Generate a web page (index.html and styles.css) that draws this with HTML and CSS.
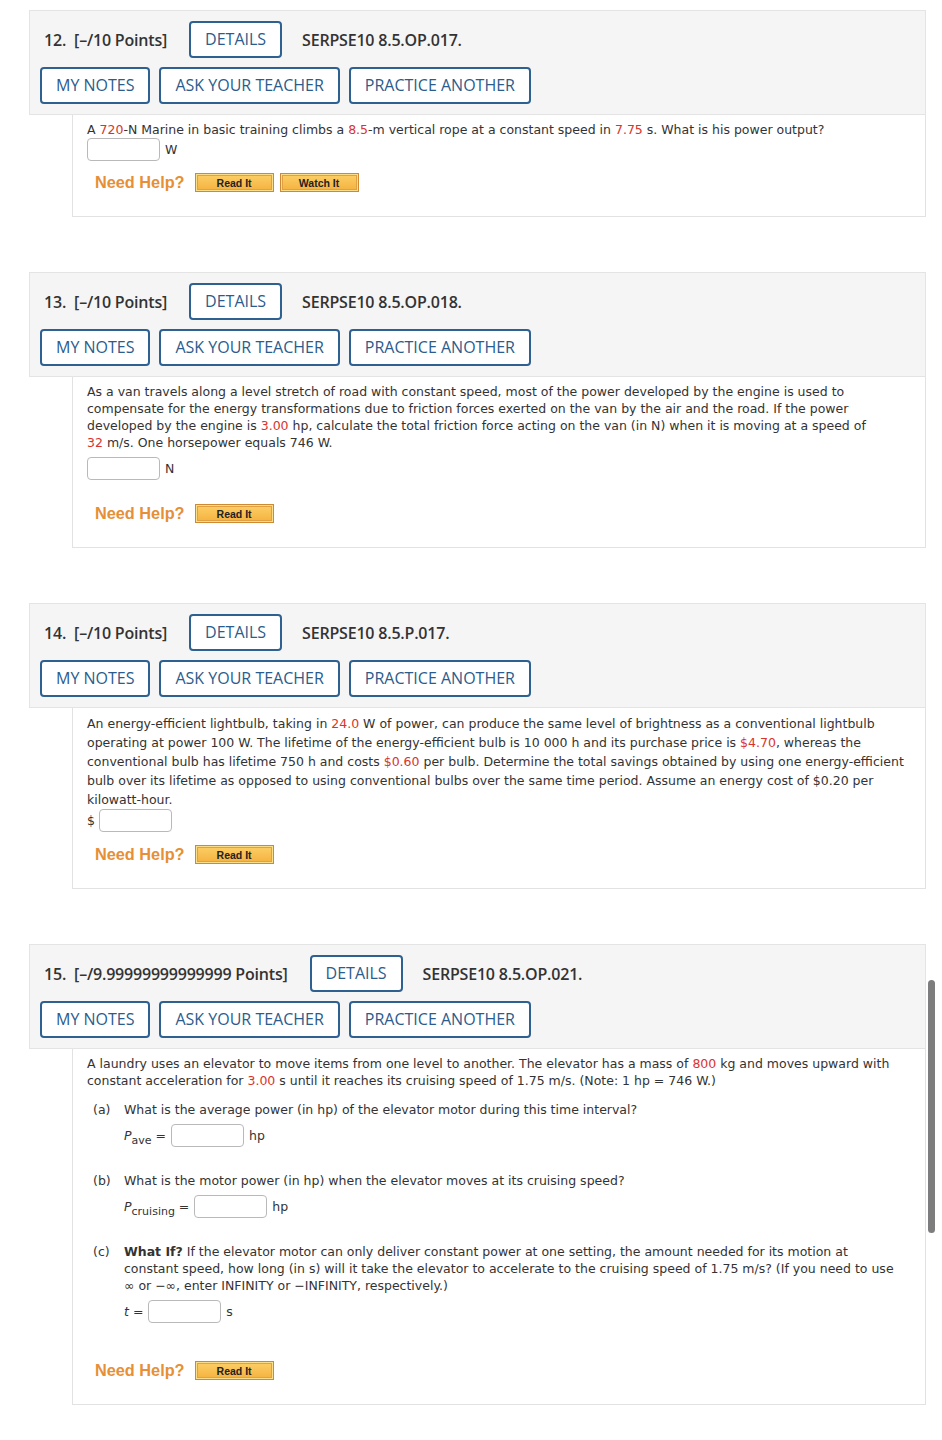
FILE: index.html
```html
<!DOCTYPE html>
<html lang="en">
<head>
  <meta charset="UTF-8">
  <meta name="viewport" content="width=device-width, initial-scale=1.0">
  <title>Assignment</title>
  <link rel="stylesheet" href="styles.css">
</head>
<body>
  <main class="assignment">

    <!-- 12 -->
    <section class="question">
      <div class="q-head">
        <div class="q-row">
          <span class="q-title"><span class="q-num">12.</span>[–/10 Points]</span>
          <button type="button" class="q-btn">DETAILS</button>
          <span class="q-code">SERPSE10 8.5.OP.017.</span>
        </div>
        <div class="q-row">
          <button type="button" class="q-btn">MY NOTES</button>
          <button type="button" class="q-btn">ASK YOUR TEACHER</button>
          <button type="button" class="q-btn">PRACTICE ANOTHER</button>
        </div>
      </div>
      <div class="q-body q12">
        <p class="text">A <span class="red">720</span>-N Marine in basic training climbs a <span class="red">8.5</span>-m vertical rope at a constant speed in <span class="red">7.75</span> s. What is his power output?</p>
        <div class="answer"><input type="text" class="box"><span class="unit">W</span></div>
        <div class="help">
          <span class="help-label">Need Help?</span>
          <button type="button" class="help-btn">Read It</button>
          <button type="button" class="help-btn">Watch It</button>
        </div>
      </div>
    </section>

    <!-- 13 -->
    <section class="question">
      <div class="q-head">
        <div class="q-row">
          <span class="q-title"><span class="q-num">13.</span>[–/10 Points]</span>
          <button type="button" class="q-btn">DETAILS</button>
          <span class="q-code">SERPSE10 8.5.OP.018.</span>
        </div>
        <div class="q-row">
          <button type="button" class="q-btn">MY NOTES</button>
          <button type="button" class="q-btn">ASK YOUR TEACHER</button>
          <button type="button" class="q-btn">PRACTICE ANOTHER</button>
        </div>
      </div>
      <div class="q-body q13">
        <p class="text">As a van travels along a level stretch of road with constant speed, most of the power developed by the engine is used to compensate for the energy transformations due to friction forces exerted on the van by the air and the road. If the power developed by the engine is <span class="red">3.00</span> hp, calculate the total friction force acting on the van (in N) when it is moving at a speed of <span class="red">32</span>&nbsp;m/s. One horsepower equals 746 W.</p>
        <div class="answer"><input type="text" class="box"><span class="unit">N</span></div>
        <div class="help">
          <span class="help-label">Need Help?</span>
          <button type="button" class="help-btn">Read It</button>
        </div>
      </div>
    </section>

    <!-- 14 -->
    <section class="question">
      <div class="q-head">
        <div class="q-row">
          <span class="q-title"><span class="q-num">14.</span>[–/10 Points]</span>
          <button type="button" class="q-btn">DETAILS</button>
          <span class="q-code">SERPSE10 8.5.P.017.</span>
        </div>
        <div class="q-row">
          <button type="button" class="q-btn">MY NOTES</button>
          <button type="button" class="q-btn">ASK YOUR TEACHER</button>
          <button type="button" class="q-btn">PRACTICE ANOTHER</button>
        </div>
      </div>
      <div class="q-body q14">
        <p class="text tall">An energy-efficient lightbulb, taking in <span class="red">24.0</span> W of power, can produce the same level of brightness as a conventional lightbulb operating at power 100 W. The lifetime of the energy-efficient bulb is 10 000 h and its purchase price is <span class="red">$4.70</span>, whereas the conventional bulb has lifetime 750 h and costs <span class="red">$0.60</span> per bulb. Determine the total savings obtained by using one energy-efficient bulb over its lifetime as opposed to using conventional bulbs over the same time period. Assume an energy cost of $0.20 per kilowatt-hour.</p>
        <div class="answer"><span class="pre">$</span><input type="text" class="box"></div>
        <div class="help">
          <span class="help-label">Need Help?</span>
          <button type="button" class="help-btn">Read It</button>
        </div>
      </div>
    </section>

    <!-- 15 -->
    <section class="question">
      <div class="q-head">
        <div class="q-row">
          <span class="q-title"><span class="q-num">15.</span>[–/9.99999999999999 Points]</span>
          <button type="button" class="q-btn">DETAILS</button>
          <span class="q-code">SERPSE10 8.5.OP.021.</span>
        </div>
        <div class="q-row">
          <button type="button" class="q-btn">MY NOTES</button>
          <button type="button" class="q-btn">ASK YOUR TEACHER</button>
          <button type="button" class="q-btn">PRACTICE ANOTHER</button>
        </div>
      </div>
      <div class="q-body q15">
        <p class="text">A laundry uses an elevator to move items from one level to another. The elevator has a mass of <span class="red">800</span> kg and moves upward with constant acceleration for <span class="red">3.00</span> s until it reaches its cruising speed of 1.75 m/s. (Note: 1 hp = 746 W.)</p>

        <div class="part">
          <span class="part-label">(a)</span>
          <div class="part-main">
            <p class="text">What is the average power (in hp) of the elevator motor during this time interval?</p>
            <div class="answer"><span class="var"><i>P</i><sub>ave</sub> =</span><input type="text" class="box"><span class="unit">hp</span></div>
          </div>
        </div>

        <div class="part">
          <span class="part-label">(b)</span>
          <div class="part-main">
            <p class="text">What is the motor power (in hp) when the elevator moves at its cruising speed?</p>
            <div class="answer"><span class="var"><i>P</i><sub>cruising</sub> =</span><input type="text" class="box"><span class="unit">hp</span></div>
          </div>
        </div>

        <div class="part">
          <span class="part-label">(c)</span>
          <div class="part-main">
            <p class="text"><b>What If?</b> If the elevator motor can only deliver constant power at one setting, the amount needed for its motion at constant speed, how long (in s) will it take the elevator to accelerate to the cruising speed of 1.75 m/s? (If you need to use ∞ or −∞, enter INFINITY or −INFINITY, respectively.)</p>
            <div class="answer"><span class="var"><i>t</i> =</span><input type="text" class="box"><span class="unit">s</span></div>
          </div>
        </div>

        <div class="help help-last">
          <span class="help-label">Need Help?</span>
          <button type="button" class="help-btn">Read It</button>
        </div>
      </div>
    </section>

  </main>

  <div class="scrollbar"></div>
</body>
</html>
```

FILE: styles.css
```css
body {
  margin: 0;
  background-color: #fff;
  color: #333;
}

.assignment {
  padding: 10px 16px 0 29px;
}

.question {
  margin-bottom: 55px;
}

/* header with the grey band */
.q-head {
  display: flex;
  flex-direction: column;
  gap: 9px;
  padding: 10px;
  background-color: #f5f5f5;
  border: 1px solid #e4e4e4;
  font-family: "Open Sans", "Liberation Sans", sans-serif;
}

.q-row {
  display: flex;
  align-items: center;
  gap: 9px;
}

.q-title {
  margin-left: 4px;
  margin-right: 13px;
  font-size: 16px;
  font-weight: 600;
  letter-spacing: -0.2px;
  color: #333;
}

.q-num {
  margin-right: 8px;
}

.q-code {
  margin-left: 11px;
  font-size: 16px;
  font-weight: 600;
  letter-spacing: -0.2px;
  color: #333;
}

.q-btn {
  padding: 6px 14px;
  border: 2px solid #2f6190;
  border-radius: 4px;
  background-color: #fff;
  color: #2b5c8c;
  font-family: "Open Sans", "Liberation Sans", sans-serif;
  font-size: 16px;
  line-height: 21px;
  cursor: pointer;
}

/* question body */
.q-body {
  margin-left: 43px;
  padding: 6px 16px 24px 14px;
  border: 1px solid #e2e2e2;
  border-top: none;
  font-family: "DejaVu Sans", Verdana, sans-serif;
  font-size: 12.5px;
  color: #333;
}

.text {
  margin: 0;
  line-height: 17px;
}

.text.tall {
  line-height: 19px;
}

.red {
  color: #d9342c;
}

.answer {
  display: flex;
  align-items: center;
  gap: 5px;
  margin-top: 0;
}

.q13 .answer {
  margin-top: 6px;
}

.box {
  width: 73px;
  height: 23px;
  box-sizing: border-box;
  margin: 0;
  border: 1px solid #b9b9b9;
  border-radius: 4px;
  background-color: #fff;
}

.pre {
  margin-right: -1px;
}

.help {
  display: flex;
  align-items: center;
  gap: 6px;
  margin-top: 12px;
  margin-left: 8px;
}

.q13 .help {
  margin-top: 24px;
}

.q14 .help {
  margin-top: 13px;
}

.q15 .help-last {
  margin-top: 38px;
}

.help-label {
  margin-right: 4px;
  font-family: "Liberation Sans", Arial, sans-serif;
  font-size: 16.3px;
  font-weight: bold;
  color: #e68f36;
}

.help-btn {
  width: 79px;
  height: 19px;
  padding: 0;
  border: 1px solid #cf8a30;
  box-shadow: inset 0 0 0 1px #fbdd8c, inset 0 0 0 2px #e0a043;
  background: linear-gradient(#fdd067, #f4b13e);
  color: #222;
  font-family: "Liberation Sans", Arial, sans-serif;
  font-size: 10.5px;
  font-weight: bold;
  cursor: pointer;
}

/* sub-parts of question 15 */
.part {
  display: flex;
  margin-top: 12px;
  margin-left: 6px;
}

.part + .part {
  margin-top: 25px;
}

.part-label {
  width: 31px;
  flex-shrink: 0;
  line-height: 17px;
}

.part-main {
  padding-right: 5px;
}

.part-main .answer {
  margin-top: 6px;
}

.var {
  line-height: 17px;
}

.var sub {
  font-size: 11px;
  line-height: 0;
}

.scrollbar {
  position: fixed;
  top: 980px;
  left: 928px;
  width: 7px;
  height: 253px;
  border-radius: 4px;
  background-color: #7d7d7d;
}
```
